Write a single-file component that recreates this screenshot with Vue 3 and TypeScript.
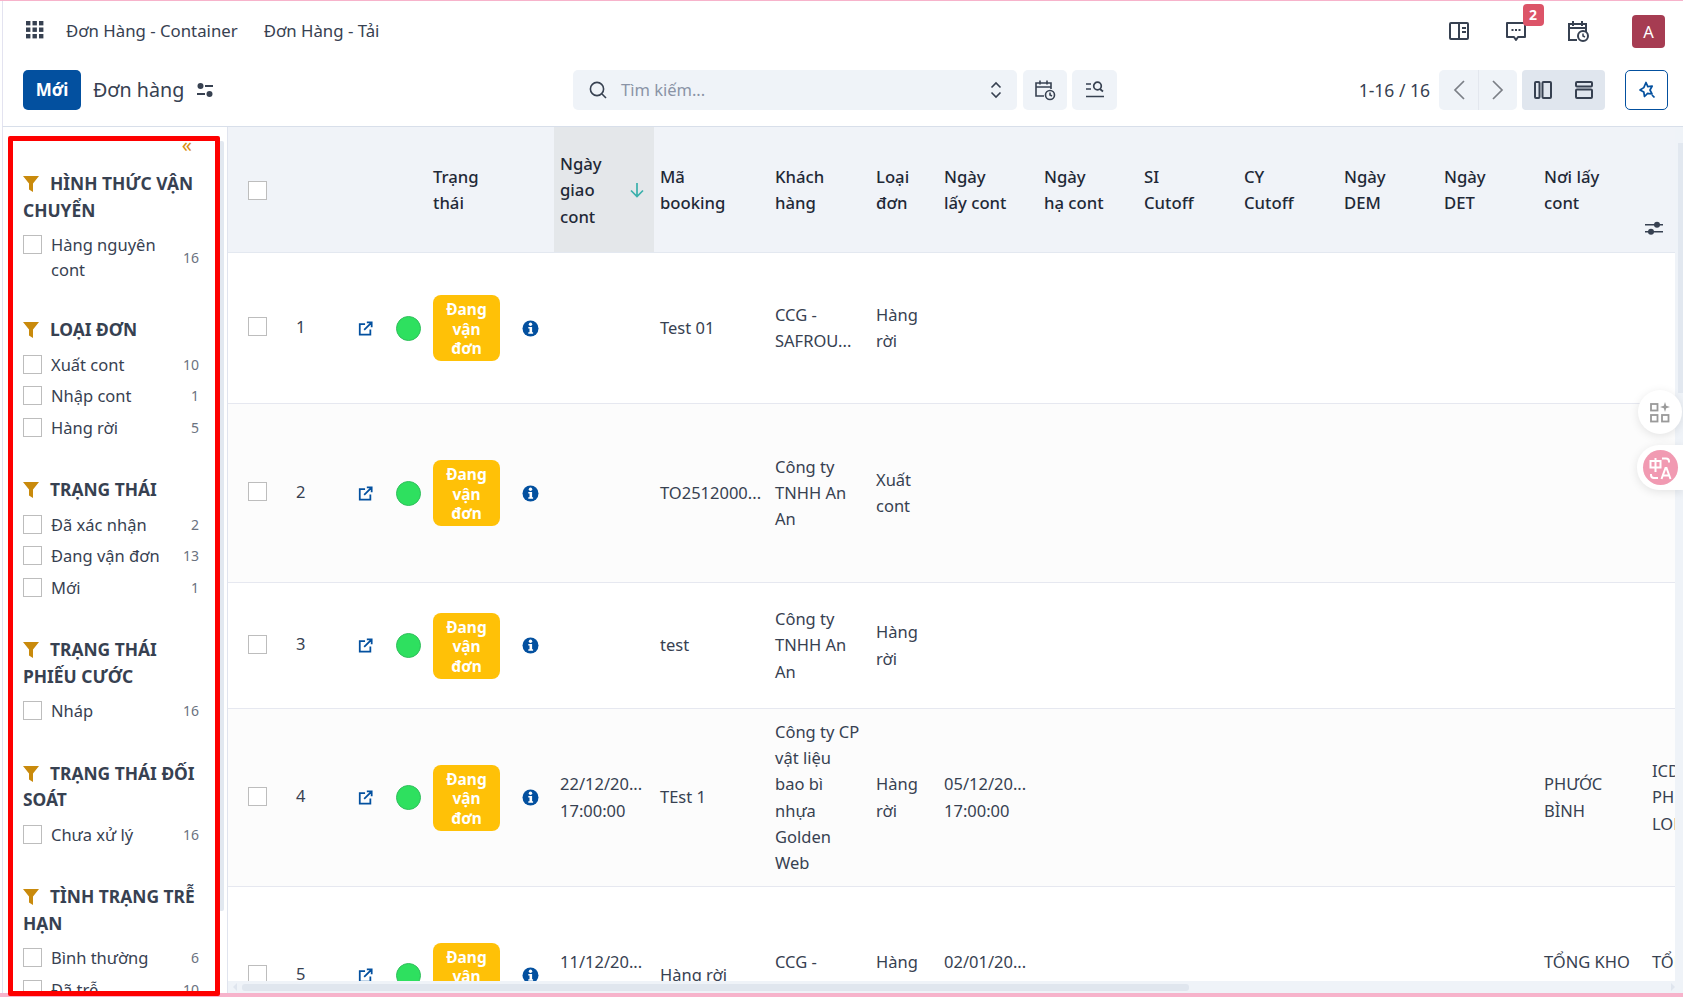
<script setup lang="ts">
interface FilterItem { label: string; count: number }
interface FilterGroup { title: string; items: FilterItem[] }
interface OrderRow {
  height: number
  date: string
  booking: string
  customer: string
  type: string
  pickup: string
  from: string
  to: string
}

const groups: FilterGroup[] = [
  { title: "HÌNH THỨC VẬN CHUYỂN", items: [{ label: "Hàng nguyên cont", count: 16 }] },
  { title: "LOẠI ĐƠN", items: [{ label: "Xuất cont", count: 10 }, { label: "Nhập cont", count: 1 }, { label: "Hàng rời", count: 5 }] },
  { title: "TRẠNG THÁI", items: [{ label: "Đã xác nhận", count: 2 }, { label: "Đang vận đơn", count: 13 }, { label: "Mới", count: 1 }] },
  { title: "TRẠNG THÁI PHIẾU CƯỚC", items: [{ label: "Nháp", count: 16 }] },
  { title: "TRẠNG THÁI ĐỐI SOÁT", items: [{ label: "Chưa xử lý", count: 16 }] },
  { title: "TÌNH TRẠNG TRỄ HẠN", items: [{ label: "Bình thường", count: 6 }, { label: "Đã trễ", count: 10 }] },
];

const colWidths = [56, 61, 40, 42, 79, 48, 100, 115, 101, 68, 100, 100, 100, 100, 100, 100, 108, 100];

const headers = ["Mã\nbooking", "Khách\nhàng", "Loại\nđơn", "Ngày\nlấy cont", "Ngày\nhạ cont", "SI\nCutoff", "CY\nCutoff", "Ngày\nDEM", "Ngày\nDET", "Nơi lấy\ncont"];

const rows: OrderRow[] = [
  { height: 151, date: "", booking: "Test 01", customer: "CCG -\nSAFROU...", type: "Hàng\nrời", pickup: "", from: "", to: "" },
  { height: 179, date: "", booking: "TO2512000...", customer: "Công ty\nTNHH An\nAn", type: "Xuất\ncont", pickup: "", from: "", to: "" },
  { height: 126, date: "", booking: "test", customer: "Công ty\nTNHH An\nAn", type: "Hàng\nrời", pickup: "", from: "", to: "" },
  { height: 178, date: "22/12/20...\n17:00:00", booking: "TEst 1", customer: "Công ty CP\nvật liệu\nbao bì\nnhựa\nGolden\nWeb", type: "Hàng\nrời", pickup: "05/12/20...\n17:00:00", from: "PHƯỚC\nBÌNH", to: "ICD\nPHƯỚC\nLONG" },
  { height: 178, date: "11/12/20...\n17:00:00", booking: "Hàng rời", customer: "CCG -\nSAFROU...", type: "Hàng\nrời", pickup: "02/01/20...\n17:00:00", from: "TỔNG KHO\nLONG AN", to: "TỔNG\nKHO" },
];
</script>

<template>
  <div class="page">
    <div class="strip-top"></div>
    <header class="navbar">
      <svg class="apps" width="18" height="18" viewBox="0 0 18 18" fill="#374151">
        <rect v-for="p in 9" :key="p" :x="((p - 1) % 3) * 6.5" :y="Math.floor((p - 1) / 3) * 6.5" width="4.4" height="4.4" />
      </svg>
      <a class="nav-link">Đơn Hàng - Container</a>
      <a class="nav-link">Đơn Hàng - Tải</a>
      <div class="nav-right">
        <svg class="nav-icon" width="22" height="22" viewBox="0 0 22 22" fill="none" stroke="#374151" stroke-width="2">
          <rect x="2" y="3" width="18" height="16" rx="1" />
          <path d="M11 3v16M14 8h4M14 12h4" />
        </svg>
        <span class="msg">
          <svg width="24" height="24" viewBox="0 0 24 24" fill="none" stroke="#374151" stroke-width="2">
            <path d="M3 4h18v14h-7l-2 3-2-3H3z" stroke-linejoin="round" />
            <path d="M7.5 11h2M11 11h2M14.5 11h2" />
          </svg>
          <b class="msg-badge">2</b>
        </span>
        <svg class="nav-icon" width="24" height="24" viewBox="0 0 24 24" fill="none" stroke="#374151" stroke-width="2">
          <path d="M11 21H3V5h17v8M3 9h17M7 2v5M16 2v5" />
          <circle cx="17" cy="17" r="5" />
          <path d="M17 14.5V17l2 1" stroke-width="1.5" />
        </svg>
        <span class="avatar">A</span>
      </div>
    </header>

    <div class="controls">
      <div class="controls-left">
        <button class="btn-new">Mới</button>
        <span class="title">Đơn hàng</span>
        <svg width="18" height="18" viewBox="0 0 18 18" fill="#374151">
          <circle cx="4.5" cy="5" r="3" />
          <rect x="9" y="4" width="8" height="2" />
          <rect x="1" y="12" width="8" height="2" />
          <circle cx="13.5" cy="13" r="3" />
        </svg>
      </div>
      <div class="search-wrap">
        <div class="search">
          <svg width="20" height="20" viewBox="0 0 20 20" fill="none" stroke="#374151" stroke-width="1.6">
            <circle cx="9" cy="9" r="6.6" />
            <path d="M14 14l4 4" />
          </svg>
          <span class="placeholder">Tìm kiếm...</span>
          <svg width="14" height="20" viewBox="0 0 14 20" fill="none" stroke="#374151" stroke-width="1.6">
            <path d="M2.5 7.500L7 3l4.500 4.500M2.500 12.500L7 17l4.500-4.500" />
          </svg>
        </div>
        <button class="search-btn">
          <svg width="22" height="22" viewBox="0 0 22 22" fill="none" stroke="#374151" stroke-width="1.6">
            <path d="M10 17H2V4h15v6M2 8h15M6 1.500v4M13 1.500v4" />
            <circle cx="16" cy="16" r="4.500" />
            <path d="M16 13.500V16l2 1" />
          </svg>
        </button>
        <button class="search-btn wide">
          <svg width="20" height="20" viewBox="0 0 20 20" fill="none" stroke="#374151" stroke-width="1.7">
            <path d="M1 4h5M1 9h5M1 16.500h18" />
            <circle cx="12.500" cy="6" r="3.800" />
            <path d="M15 9l3 2.500" />
          </svg>
        </button>
      </div>
      <div class="controls-right">
        <span class="pager">1-16 / 16</span>
        <div class="pager-btns">
          <button class="pg">
            <svg width="14" height="22" viewBox="0 0 14 22" fill="none" stroke="#7b7f86" stroke-width="1.7"><path d="M12 2L3 11l9 9" /></svg>
          </button>
          <button class="pg">
            <svg width="14" height="22" viewBox="0 0 14 22" fill="none" stroke="#7b7f86" stroke-width="1.7"><path d="M2 2l9 9-9 9" /></svg>
          </button>
        </div>
        <div class="view-btns">
          <button class="vw">
            <svg width="18" height="18" viewBox="0 0 18 18" fill="none" stroke="#374151" stroke-width="2"><rect x="1" y="1" width="4.500" height="16" rx="1" /><rect x="8.500" y="1" width="8.500" height="16" rx="1" /></svg>
          </button>
          <button class="vw">
            <svg width="18" height="18" viewBox="0 0 18 18" fill="none" stroke="#374151" stroke-width="2"><rect x="1" y="1" width="16" height="4.500" rx="1" /><rect x="1" y="8.500" width="16" height="8.500" rx="1" /></svg>
          </button>
        </div>
        <button class="btn-magic">
          <svg width="18" height="18" viewBox="0 0 18 18" fill="none" stroke="#03509f" stroke-width="1.7">
            <path d="M8 1.500L9.800 5.600 14.200 5 12 9l2 4-4.400-.6-3.100 3.100-.7-4.500L2 9l3.800-2.400z" stroke-linejoin="round" />
            <path d="M14 14l2.500 2.500" />
          </svg>
        </button>
      </div>
    </div>

    <div class="body">
      <aside class="sidebar">
        <div class="side-scroll">
          <div class="collapse">«</div>
          <section v-for="g in groups" :key="g.title" class="group">
            <h4 class="group-title">
              <svg class="funnel" width="16" height="16" viewBox="0 0 16 16" fill="#c98a0c"><path d="M0 0h16L10 7.500V16l-4-2.500V7.500z" /></svg>{{ g.title }}
            </h4>
            <div v-for="it in g.items" :key="it.label" class="item">
              <span class="box"></span>
              <span class="item-label">{{ it.label }}</span>
              <span class="item-count">{{ it.count }}</span>
            </div>
          </section>
        </div>
        <div class="side-bar"><i class="side-thumb"></i></div>
      </aside>

      <main class="main">
        <div class="table-row">
          <div class="table-wrap">
            <table class="orders">
              <colgroup>
                <col v-for="(w, i) in colWidths" :key="i" :style="{ width: w + 'px' }" />
              </colgroup>
              <thead>
                <tr>
                  <th class="cell-check"><span class="box"></span></th>
                  <th></th>
                  <th></th>
                  <th></th>
                  <th>Trạng<br />thái</th>
                  <th></th>
                  <th class="sorted">
                    <div class="sort-cell">
                      <span>Ngày<br />giao<br />cont</span>
                      <svg width="16" height="18" viewBox="0 0 16 18" fill="none" stroke="#3ab0ac" stroke-width="1.7"><path d="M8 2v13M2 9.500l6 6 6-6" /></svg>
                    </div>
                  </th>
                  <th v-for="h in headers" :key="h" class="pre">{{ h }}</th>
                  <th></th>
                </tr>
              </thead>
              <tbody>
                <tr v-for="(r, i) in rows" :key="i" :style="{ height: r.height + 'px' }">
                  <td class="cell-check"><span class="box"></span></td>
                  <td class="cell-num">{{ i + 1 }}</td>
                  <td>
                    <svg class="ico" width="15" height="15" viewBox="0 0 17 17" fill="none" stroke="#03509f" stroke-width="2">
                      <path d="M8 3.500H2v12h12v-6M7 10L15 2M10 1.500h5.500V7" />
                    </svg>
                  </td>
                  <td><span class="dot"></span></td>
                  <td><span class="badge">Đang vận đơn</span></td>
                  <td>
                    <svg class="ico info" width="17" height="17" viewBox="0 0 17 17">
                      <circle cx="8.500" cy="8.500" r="8" fill="#03509f" />
                      <circle cx="8.500" cy="4.300" r="1.700" fill="#fff" />
                      <path d="M6.300 7h3.800v5.200h1v1.500H6.300v-1.500h1.200V8.500H6.300z" fill="#fff" />
                    </svg>
                  </td>
                  <td class="pre">{{ r.date }}</td>
                  <td class="pre">{{ r.booking }}</td>
                  <td class="pre">{{ r.customer }}</td>
                  <td class="pre">{{ r.type }}</td>
                  <td class="pre">{{ r.pickup }}</td>
                  <td></td>
                  <td></td>
                  <td></td>
                  <td></td>
                  <td></td>
                  <td class="pre">{{ r.from }}</td>
                  <td class="pre">{{ r.to }}</td>
                </tr>
              </tbody>
            </table>
            <svg class="col-config" width="20" height="18" viewBox="0 0 20 18" fill="#374151">
              <rect x="1" y="5" width="18" height="1.500" />
              <circle cx="13" cy="5.700" r="3" />
              <rect x="1" y="12" width="18" height="1.500" />
              <circle cx="7" cy="12.700" r="3" />
            </svg>
          </div>
          <div class="v-bar"><i class="v-thumb"></i></div>
        </div>
        <div class="h-bar">
          <i class="arrow-left"></i>
          <i class="h-thumb"></i>
          <i class="arrow-right"></i>
        </div>
      </main>
    </div>
    <div class="strip-bottom"></div>

    <button class="float-apps">
      <svg width="22" height="22" viewBox="0 0 22 22" fill="none" stroke="#9a9a9a" stroke-width="1.800">
        <rect x="2" y="3" width="6.500" height="6.500" />
        <rect x="2" y="14" width="6.500" height="6.500" />
        <rect x="13" y="14" width="6.500" height="6.500" />
        <path d="M16 1l1.200 3.800L21 6l-3.800 1.200L16 11l-1.200-3.800L11 6l3.800-1.200z" fill="#9a9a9a" stroke="none" />
      </svg>
    </button>
    <div class="float-translate">
      <span class="translate-icon">
        <svg width="26" height="26" viewBox="0 0 26 26" fill="none" stroke="#fff" stroke-width="2">
          <rect x="2.500" y="6" width="10" height="6.500" />
          <path d="M7.500 3v14M14 3.500h4a3 3 0 0 1 3 3v1M3 19v1a3 3 0 0 0 3 3h4M13.500 24l4-11h1l4 11M15 20.500h6" />
        </svg>
      </span>
    </div>

    <div class="red-frame"></div>
  </div>
</template>

<style scoped>
.page {
  position: relative;
  box-sizing: border-box;
  width: 1683px;
  height: 997px;
  display: flex;
  flex-direction: column;
  overflow: hidden;
  background: #fff;
  color: #374151;
  font-family: "Noto Sans", "Liberation Sans", sans-serif;
  font-size: 16.500px;
  line-height: 26px;
  padding-left: 2px;
}

.strip-top {
  height: 1px;
  flex-shrink: 0;
  margin-left: -2px;
  background: #f7b3cb;
}

.strip-bottom {
  height: 4px;
  flex-shrink: 0;
  margin-left: -2px;
  background: #f7b3cb;
}

button {
  border: 0;
  padding: 0;
  font: inherit;
  display: flex;
  align-items: center;
  justify-content: center;
}

/* top navigation */
.navbar {
  height: 60px;
  display: flex;
  align-items: center;
  border-left: 1px solid #e3e3f0;
  padding-left: 23px;
  flex-shrink: 0;
}

.apps {
  margin-right: 22px;
  margin-top: -3px;
}

.nav-link {
  margin-right: 26px;
  font-size: 16.800px;
  color: #374151;
}

.nav-right {
  margin-left: auto;
  display: flex;
  align-items: center;
  padding-right: 18px;
}

.nav-icon {
  display: block;
}

.msg {
  position: relative;
  margin: 0 38.500px 0 34px;
  display: block;
  height: 24px;
}

.msg-badge {
  position: absolute;
  left: 19px;
  top: -15px;
  width: 21px;
  height: 22px;
  border-radius: 4px;
  background: #dc5468;
  color: #fff;
  font-size: 14px;
  line-height: 22px;
  text-align: center;
}

.avatar {
  margin-left: 42px;
  width: 33px;
  height: 33px;
  border-radius: 4px;
  background: #a63c52;
  color: #fff;
  text-align: center;
  line-height: 33px;
}

/* control panel */
.controls {
  height: 66px;
  flex-shrink: 0;
  display: flex;
  align-items: flex-start;
  padding-top: 9px;
  box-sizing: border-box;
  border-left: 1px solid #e3e3f0;
  border-bottom: 1px solid #d8dfea;
}

.controls-left {
  width: 570px;
  padding-left: 20px;
  box-sizing: border-box;
  display: flex;
  align-items: center;
  height: 40px;
}

.btn-new {
  width: 58px;
  height: 40px;
  background: #03509f;
  color: #fff;
  font-weight: 700;
  font-size: 17px;
  border-radius: 5px;
  margin-right: 12px;
}

.title {
  font-size: 19.700px;
  margin-right: 12px;
}

.search-wrap {
  display: flex;
  gap: 6px;
}

.search {
  width: 444px;
  height: 40px;
  box-sizing: border-box;
  background: #eff3f8;
  border-radius: 5px;
  display: flex;
  align-items: center;
  padding: 0 14px 0 15px;
}

.placeholder {
  flex: 1;
  margin-left: 13px;
  color: #8a94a6;
}

.search-btn {
  width: 44px;
  height: 40px;
  background: #eff3f8;
  border-radius: 5px;
}

.search-btn.wide {
  width: 45px;
  margin-left: -1px;
}

.controls-right {
  margin-left: auto;
  display: flex;
  align-items: center;
  height: 40px;
  padding-right: 15px;
}

.pager {
  margin-right: 9px;
  font-size: 17.500px;
}

.pager-btns {
  display: flex;
  background: #eff3f8;
  border-radius: 5px;
  margin-right: 5px;
}

.pg {
  width: 39px;
  height: 40px;
  background: transparent;
}

.pg + .pg {
  border-left: 1px solid #e3e7ee;
}

.view-btns {
  display: flex;
  background: #e0e6ee;
  border-radius: 4px;
  margin-right: 20px;
}

.vw {
  width: 41.500px;
  height: 40px;
  background: transparent;
}

.btn-magic {
  width: 43px;
  height: 40px;
  background: #fff;
  border: 1px solid #03509f;
  border-radius: 5px;
}

/* body */
.body {
  flex: 1;
  display: flex;
  min-height: 0;
}

.sidebar {
  width: 226px;
  flex-shrink: 0;
  display: flex;
  border-left: 1px solid #e3e3f0;
  border-right: 1px solid #e0e4ee;
  box-sizing: border-box;
  overflow: hidden;
}

.side-scroll {
  flex: 1;
  min-width: 0;
  overflow: hidden;
  padding: 0 20px 0 20px;
  position: relative;
}

.collapse {
  height: 43px;
  text-align: right;
  color: #d98e14;
  font-size: 20px;
  line-height: 36px;
  padding-right: 7px;
}

.group {
  margin-bottom: 36.500px;
}

.group:first-of-type {
  margin-bottom: 34px;
}

.group-title {
  margin: 0 0 9px;
  font-size: 17.400px;
  line-height: 26.500px;
  font-weight: 700;
  color: #374151;
}

.funnel {
  margin-right: 11px;
  vertical-align: -2px;
}

.item {
  display: flex;
  line-height: 25px;
  margin-bottom: 6.500px;
}

.item-label {
  flex: 1;
  margin-left: 9px;
  padding-right: 12px;
}

.item-count {
  align-self: center;
  font-size: 14px;
  color: #6b7280;
}

.box {
  display: inline-block;
  box-sizing: border-box;
  width: 19px;
  height: 19px;
  border: 1px solid #bdbdbd;
  background: #fff;
  flex-shrink: 0;
  margin-top: 3px;
  vertical-align: middle;
}

.side-bar {
  width: 8px;
  flex-shrink: 0;
  padding-top: 14px;
  box-sizing: border-box;
}

.side-thumb {
  display: block;
  width: 5px;
  height: 770px;
  background: #e2e8f0;
  border-radius: 2px;
}

/* table */
.main {
  flex: 1;
  min-width: 0;
  display: flex;
  flex-direction: column;
}

.table-row {
  flex: 1;
  min-height: 0;
  display: flex;
}

.table-wrap {
  position: relative;
  flex: 1;
  min-width: 0;
  overflow: hidden;
}

.orders {
  table-layout: fixed;
  width: 1518px;
  border-collapse: collapse;
}

.orders th {
  height: 125px;
  background: #f0f3f8;
  font-weight: 500;
  font-size: 16.700px;
  color: #1f2937;
  text-align: left;
  padding: 2px 6px 0;
  box-sizing: border-box;
  line-height: 26.500px;
  border-bottom: 1px solid #e3e8f0;
}

.orders th.sorted {
  background: #e4e7ea;
  padding-right: 9px;
}

.sort-cell {
  display: flex;
  align-items: center;
  justify-content: space-between;
}

.orders td {
  padding: 1px 6px 0;
  vertical-align: middle;
  line-height: 26.200px;
  border-bottom: 1px solid #e6e8f0;
  color: #374151;
}

.orders tbody tr:nth-child(even) td {
  background: #fcfcfc;
}

.pre {
  white-space: pre-line;
}

.orders .cell-check {
  padding-left: 20px;
}

.cell-check .box {
  margin-top: 0;
}

tbody .cell-check .box {
  margin-top: -5px;
}

thead .cell-check .box {
  margin-top: -3px;
}

.orders .cell-num {
  padding-left: 12px;
  padding-bottom: 2px;
}

.ico {
  display: block;
  margin-left: 7px;
}

.ico.info {
  margin-left: 10px;
}

.dot {
  display: block;
  width: 25px;
  height: 25px;
  border-radius: 50%;
  background: #2ee05f;
  border: 1px solid #30bf5c;
  box-sizing: border-box;
  margin-left: 4.500px;
}

.badge {
  display: block;
  width: 67px;
  height: 66px;
  box-sizing: border-box;
  padding: 5px 4px;
  background: #ffc107;
  color: #fff;
  border-radius: 8px;
  font-size: 15.500px;
  font-weight: 700;
  line-height: 19.500px;
  text-align: center;
}

.col-config {
  position: absolute;
  left: 1416px;
  top: 92px;
}

.v-bar {
  width: 8px;
  flex-shrink: 0;
  background: #eff3f8;
  padding-top: 16px;
}

.v-thumb {
  display: block;
  margin-left: 3px;
  width: 5px;
  height: 250px;
  background: #e2e8f0;
}

.h-bar {
  height: 12px;
  flex-shrink: 0;
  background: #eff3f8;
  display: flex;
  align-items: center;
  padding: 0 8px 0 5px;
}

.h-thumb {
  width: 947px;
  height: 7px;
  background: #e0e6ee;
  border-radius: 3px;
  margin-left: 5px;
}

.arrow-left {
  border: 4px solid transparent;
  border-right-color: #dfe5ee;
  border-left-width: 0;
}

.arrow-right {
  margin-left: auto;
  border: 4px solid transparent;
  border-left-color: #dfe5ee;
  border-right-width: 0;
}

/* floating widgets */
.float-apps {
  position: absolute;
  left: 1638px;
  top: 390px;
  width: 44px;
  height: 44px;
  border-radius: 50%;
  background: #fff;
  box-shadow: 0 2px 10px rgba(0, 0, 0, 0.1);
}

.float-translate {
  position: absolute;
  left: 1637px;
  top: 445px;
  width: 46px;
  height: 45px;
  border-radius: 22px 0 0 22px;
  background: #fff;
  box-shadow: 0 2px 10px rgba(0, 0, 0, 0.1);
}

.translate-icon {
  position: absolute;
  left: 6px;
  top: 5px;
  width: 35px;
  height: 35px;
  border-radius: 50%;
  background: #f19ab2;
  display: flex;
  align-items: center;
  justify-content: center;
}

.red-frame {
  position: absolute;
  left: 8px;
  top: 136px;
  width: 212px;
  height: 860px;
  box-sizing: border-box;
  border: 5px solid #fe0000;
  border-radius: 2px;
  pointer-events: none;
}
</style>

<style>
html, body {
  margin: 0;
  overflow: hidden;
}
</style>
